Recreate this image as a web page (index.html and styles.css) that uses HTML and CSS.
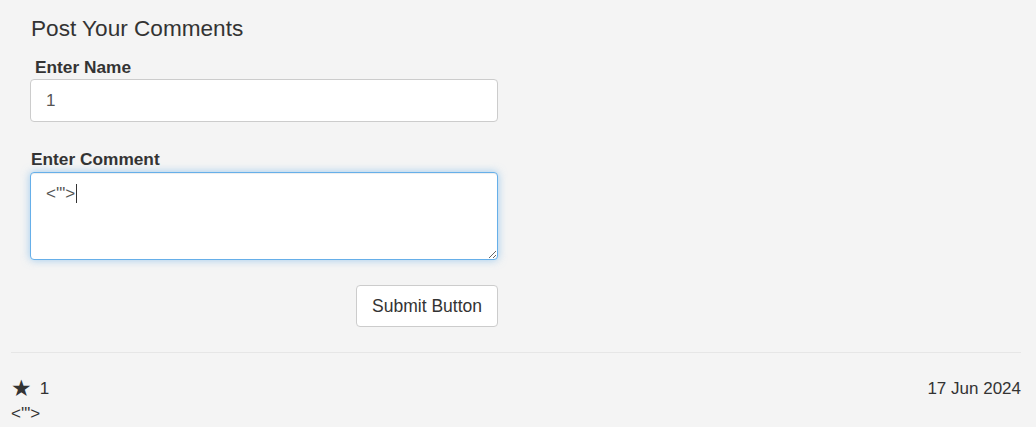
FILE: index.html
```html
<!DOCTYPE html>
<html>
<head>
<meta charset="utf-8">
<link rel="stylesheet" href="styles.css">
</head>
<body>
<div class="page">
  <div class="form-wrap">
    <h3 class="title">Post Your Comments</h3>
    <label class="lbl lbl-name">Enter Name</label>
    <input class="field" type="text" value="1">
    <label class="lbl lbl-comment">Enter Comment</label>
    <div class="area-wrap">
      <textarea class="field area focused">&lt;'"&gt;</textarea>
      <span class="caret"></span>
    </div>
    <div class="actions">
      <button class="btn">Submit Button</button>
    </div>
  </div>
  <hr class="divider">
  <div class="comment">
    <div class="comment-head">
      <span class="author"><span class="star">★</span>1</span>
      <span class="date">17 Jun 2024</span>
    </div>
    <div class="comment-body">&lt;'"&gt;</div>
  </div>
</div>
</body>
</html>
```

FILE: styles.css
```css
html, body {
  margin: 0;
  padding: 0;
  background: #f4f4f4;
  font-family: "Liberation Sans", Arial, sans-serif;
  color: #333;
}
.page {
  padding: 0 15px 0 11px;
}
.form-wrap {
  width: 468px;
  padding-left: 19px;
  display: flex;
  flex-direction: column;
}
.title {
  margin: 16px 0 0 1px;
  font-size: 22.6px;
  font-weight: normal;
  line-height: 26px;
}
.lbl {
  font-weight: bold;
  font-size: 17.3px;
  line-height: 20px;
}
.lbl-name {
  margin: 15px 0 2px 5px;
}
.lbl-comment {
  margin: 27px 0 3px 1px;
}
.field {
  box-sizing: border-box;
  width: 468px;
  height: 43px;
  margin: 0;
  padding: 6px 15px;
  border: 1px solid #ccc;
  border-radius: 4px;
  background: #fff;
  font-family: "Liberation Sans", Arial, sans-serif;
  font-size: 17px;
  color: #555;
  outline: none;
}
.area-wrap {
  position: relative;
  height: 88px;
}
.area {
  display: block;
  height: 88px;
  padding: 11px 15px;
  resize: vertical;
  line-height: 20px;
}
.caret {
  position: absolute;
  left: 46px;
  top: 12px;
  width: 1px;
  height: 19px;
  background: #333;
}
.focused {
  border-color: #66afe9;
  box-shadow: inset 0 1px 1px rgba(0,0,0,.075), 0 0 8px rgba(102,175,233,.6);
}
.actions {
  display: flex;
  justify-content: flex-end;
  margin-top: 25px;
}
.btn {
  height: 42px;
  padding: 0 15px;
  border: 1px solid #ccc;
  border-radius: 4px;
  background: #fff;
  font-family: "Liberation Sans", Arial, sans-serif;
  font-size: 17.5px;
  color: #333;
}
.divider {
  margin: 25px 0 0 0;
  border: 0;
  border-top: 1px solid #e6e6e6;
}
.comment {
  padding-top: 26px;
  font-size: 17px;
}
.comment-head {
  display: flex;
  justify-content: space-between;
  align-items: center;
  line-height: 20px;
  height: 20px;
}
.author {
  display: flex;
  align-items: center;
}
.star {
  font-family: "DejaVu Sans", sans-serif;
  font-size: 23px;
  line-height: 20px;
  margin-right: 8px;
  margin-top: -2px;
  color: #333;
}
.comment-body {
  line-height: 20px;
  margin-top: 5px;
  font-size: 17px;
}
```
